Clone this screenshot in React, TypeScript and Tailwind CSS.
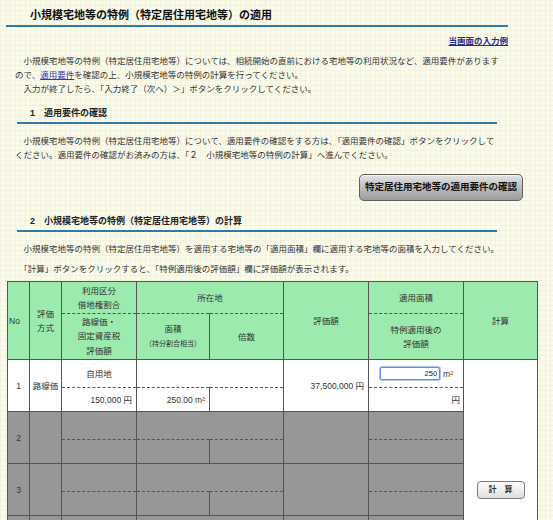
import React from 'react';

// ============================================================================
// Shared class strings
// ============================================================================

const cell = 'border border-[#555] p-0 font-normal align-middle';
const dashB = '[border-bottom-style:dashed]';
const dashT = '[border-top-style:dashed]';
const headBg = 'bg-[#9ceaae]';
const grayBg = 'bg-[#979797]';
// ideographic space for paragraph indents (JSX would trim a literal one)
const IND = '\u3000';

function SectionHeading({ num, title }: { num: string; title: string }) {
  return (
    <div className="ml-[17px] w-[480px] border-b-2 border-[#2b7aa8] pb-[2px] pl-[13px] text-[9px] font-bold leading-[14px] text-[#222]">
      {num}
      {IND}
      {title}
    </div>
  );
}

/** Empty (greyed out) data row: two sub rows */
function EmptyRow({ no }: { no: number }) {
  return (
    <>
      <tr className={`h-[28px] ${grayBg}`}>
        <td rowSpan={2} className={`${cell} text-center font-bold`}>
          {no}
        </td>
        <td rowSpan={2} className={cell}></td>
        <td className={`${cell} ${dashB}`}></td>
        <td colSpan={2} className={`${cell} ${dashB}`}></td>
        <td rowSpan={2} className={cell}></td>
        <td className={`${cell} ${dashB}`}></td>
      </tr>
      <tr className={`h-[24px] ${grayBg}`}>
        <td className={`${cell} ${dashT}`}></td>
        <td className={`${cell} ${dashT}`}></td>
        <td className={`${cell} ${dashT}`}></td>
        <td className={`${cell} ${dashT}`}></td>
      </tr>
    </>
  );
}

export default function App() {
  return (
    <div className="min-h-screen w-[553px] bg-[#fbfbec] bg-[linear-gradient(#f2f2de_1px,transparent_1px),linear-gradient(90deg,#f2f2de_1px,transparent_1px)] [background-size:5px_5px] pb-4 font-['Liberation_Sans','Noto_Sans_CJK_JP',sans-serif] text-[#333]">
      {/* Page title */}
      <div className="ml-[6px] w-[502px]">
        <h1 className="border-b-2 border-[#2b7aa8] pb-[3px] pl-[24px] pt-[8px] text-[11px] font-bold leading-[14px] text-[#111]">
          小規模宅地等の特例（特定居住用宅地等）の適用
        </h1>
        <div className="mt-[7px] text-right text-[8.5px] font-bold leading-[14px]">
          <a href="#" className="text-[#2b2b92] underline">
            当画面の入力例
          </a>
        </div>
      </div>

      <p className="ml-[15px] mt-[6px] whitespace-nowrap text-[8.5px] leading-[14px]">
        {IND}
        小規模宅地等の特例（特定居住用宅地等）については、相続開始の直前における宅地等の利用状況など、適用要件があります
        <br />
        ので、
        <a href="#" className="text-[#3535b0] underline">
          適用要件
        </a>
        を確認の上、小規模宅地等の特例の計算を行ってください。
        <br />
        {IND}
        入力が終了したら、「入力終了（次へ）＞」ボタンをクリックしてください。
      </p>

      {/* Section 1 */}
      <div className="mt-[10px]">
        <SectionHeading num="1" title="適用要件の確認" />
      </div>
      <p className="ml-[15px] mt-[10px] whitespace-nowrap text-[8.5px] leading-[14px]">
        {IND}
        小規模宅地等の特例（特定居住用宅地等）について、適用要件の確認をする方は、「適用要件の確認」ボタンをクリックして
        <br />
        ください。適用要件の確認がお済みの方は、「２{IND}小規模宅地等の特例の計算」へ進んでください。
      </p>
      <div className="mt-[12px] flex justify-end pr-[30px]">
        <button className="h-[27px] w-[164px] rounded-[5px] border border-[#5e5e5e] bg-linear-to-b from-[#e4e4e4] via-[#bdbdbd] to-[#9c9c9c] text-[9.5px] font-bold text-[#111] shadow-[inset_0_1px_0_#f4f4f4]">
          特定居住用宅地等の適用要件の確認
        </button>
      </div>

      {/* Section 2 */}
      <div className="mt-[13px]">
        <SectionHeading num="2" title="小規模宅地等の特例（特定居住用宅地等）の計算" />
      </div>
      <p className="ml-[15px] mt-[10px] whitespace-nowrap text-[8.5px] leading-[14px]">
        {IND}
        小規模宅地等の特例（特定居住用宅地等）を適用する宅地等の「適用面積」欄に適用する宅地等の面積を入力してください。
      </p>
      <p className="ml-[15px] mt-[6px] whitespace-nowrap text-[8.5px] leading-[14px]">
        {IND}
        「計算」ボタンをクリックすると、「特例適用後の評価額」欄に評価額が表示されます。
      </p>

      {/* Calculation table */}
      <table className="ml-[7px] mt-[5px] w-[530px] table-fixed border-collapse border border-[#555] text-[8.5px] leading-[14px] text-[#333]">
        <colgroup>
          <col className="w-[22px]" />
          <col className="w-[32px]" />
          <col className="w-[75px]" />
          <col className="w-[73px]" />
          <col className="w-[74px]" />
          <col className="w-[85px]" />
          <col className="w-[95px]" />
          <col className="w-[74px]" />
        </colgroup>
        <thead>
          <tr className={`h-[32px] ${headBg}`}>
            <th rowSpan={2} className={`${cell} pl-px text-left`}>
              No
            </th>
            <th rowSpan={2} className={`${cell} text-center`}>
              評価
              <br />
              方式
            </th>
            <th className={`${cell} ${dashB} text-center`}>
              利用区分
              <br />
              借地権割合
            </th>
            <th colSpan={2} className={`${cell} ${dashB} text-center`}>
              所在地
            </th>
            <th rowSpan={2} className={`${cell} text-center`}>
              評価額
            </th>
            <th className={`${cell} ${dashB} text-center`}>適用面積</th>
            <th rowSpan={2} className={`${cell} text-center`}>
              計算
            </th>
          </tr>
          <tr className={`h-[46px] ${headBg}`}>
            <th className={`${cell} ${dashT} text-center leading-[14.5px]`}>
              路線価・
              <br />
              固定資産税
              <br />
              評価額
            </th>
            <th className={`${cell} ${dashT} text-center`}>
              面積
              <br />
              <span className="text-[7px]">（持分割合相当）</span>
            </th>
            <th className={`${cell} ${dashT} text-center`}>倍数</th>
            <th className={`${cell} ${dashT} text-center`}>
              特例適用後の
              <br />
              評価額
            </th>
          </tr>
        </thead>
        <tbody>
          <tr className="h-[28px] bg-white">
            <td rowSpan={2} className={`${cell} text-center`}>
              1
            </td>
            <td rowSpan={2} className={`${cell} text-center`}>
              路線価
            </td>
            <td className={`${cell} ${dashB} text-center`}>自用地</td>
            <td colSpan={2} className={`${cell} ${dashB}`}></td>
            <td rowSpan={2} className={`${cell} pr-[4px] text-right`}>
              37,500,000 円
            </td>
            <td className={`${cell} ${dashB} pr-[10px] text-right`}>
              <div className="flex items-center justify-end gap-[3px]">
                <input
                  defaultValue="250"
                  className="h-[13px] w-[60px] rounded-[2px] border border-[#5b8ee6] bg-white px-[2px] text-right text-[7.5px] text-[#222] shadow-[0_0_0_1px_#a9c6f5] outline-none"
                />
                <span>m²</span>
              </div>
            </td>
            <td rowSpan={10} className={`${cell} bg-white text-center`}>
              <button className="h-[18px] w-[48px] rounded-[4px] border border-[#7a7a7a] bg-linear-to-b from-white to-[#dedede] text-[8px] font-bold text-[#333]">
                計{IND}算
              </button>
            </td>
          </tr>
          <tr className="h-[24px] bg-white">
            <td className={`${cell} ${dashT} pr-[4px] text-right`}>150,000 円</td>
            <td className={`${cell} ${dashT} pr-[4px] text-right`}>250.00 m²</td>
            <td className={`${cell} ${dashT}`}></td>
            <td className={`${cell} ${dashT} pr-[3px] text-right`}>円</td>
          </tr>
          <EmptyRow no={2} />
          <EmptyRow no={3} />
          <EmptyRow no={4} />
          <EmptyRow no={5} />
        </tbody>
      </table>
    </div>
  );
}
